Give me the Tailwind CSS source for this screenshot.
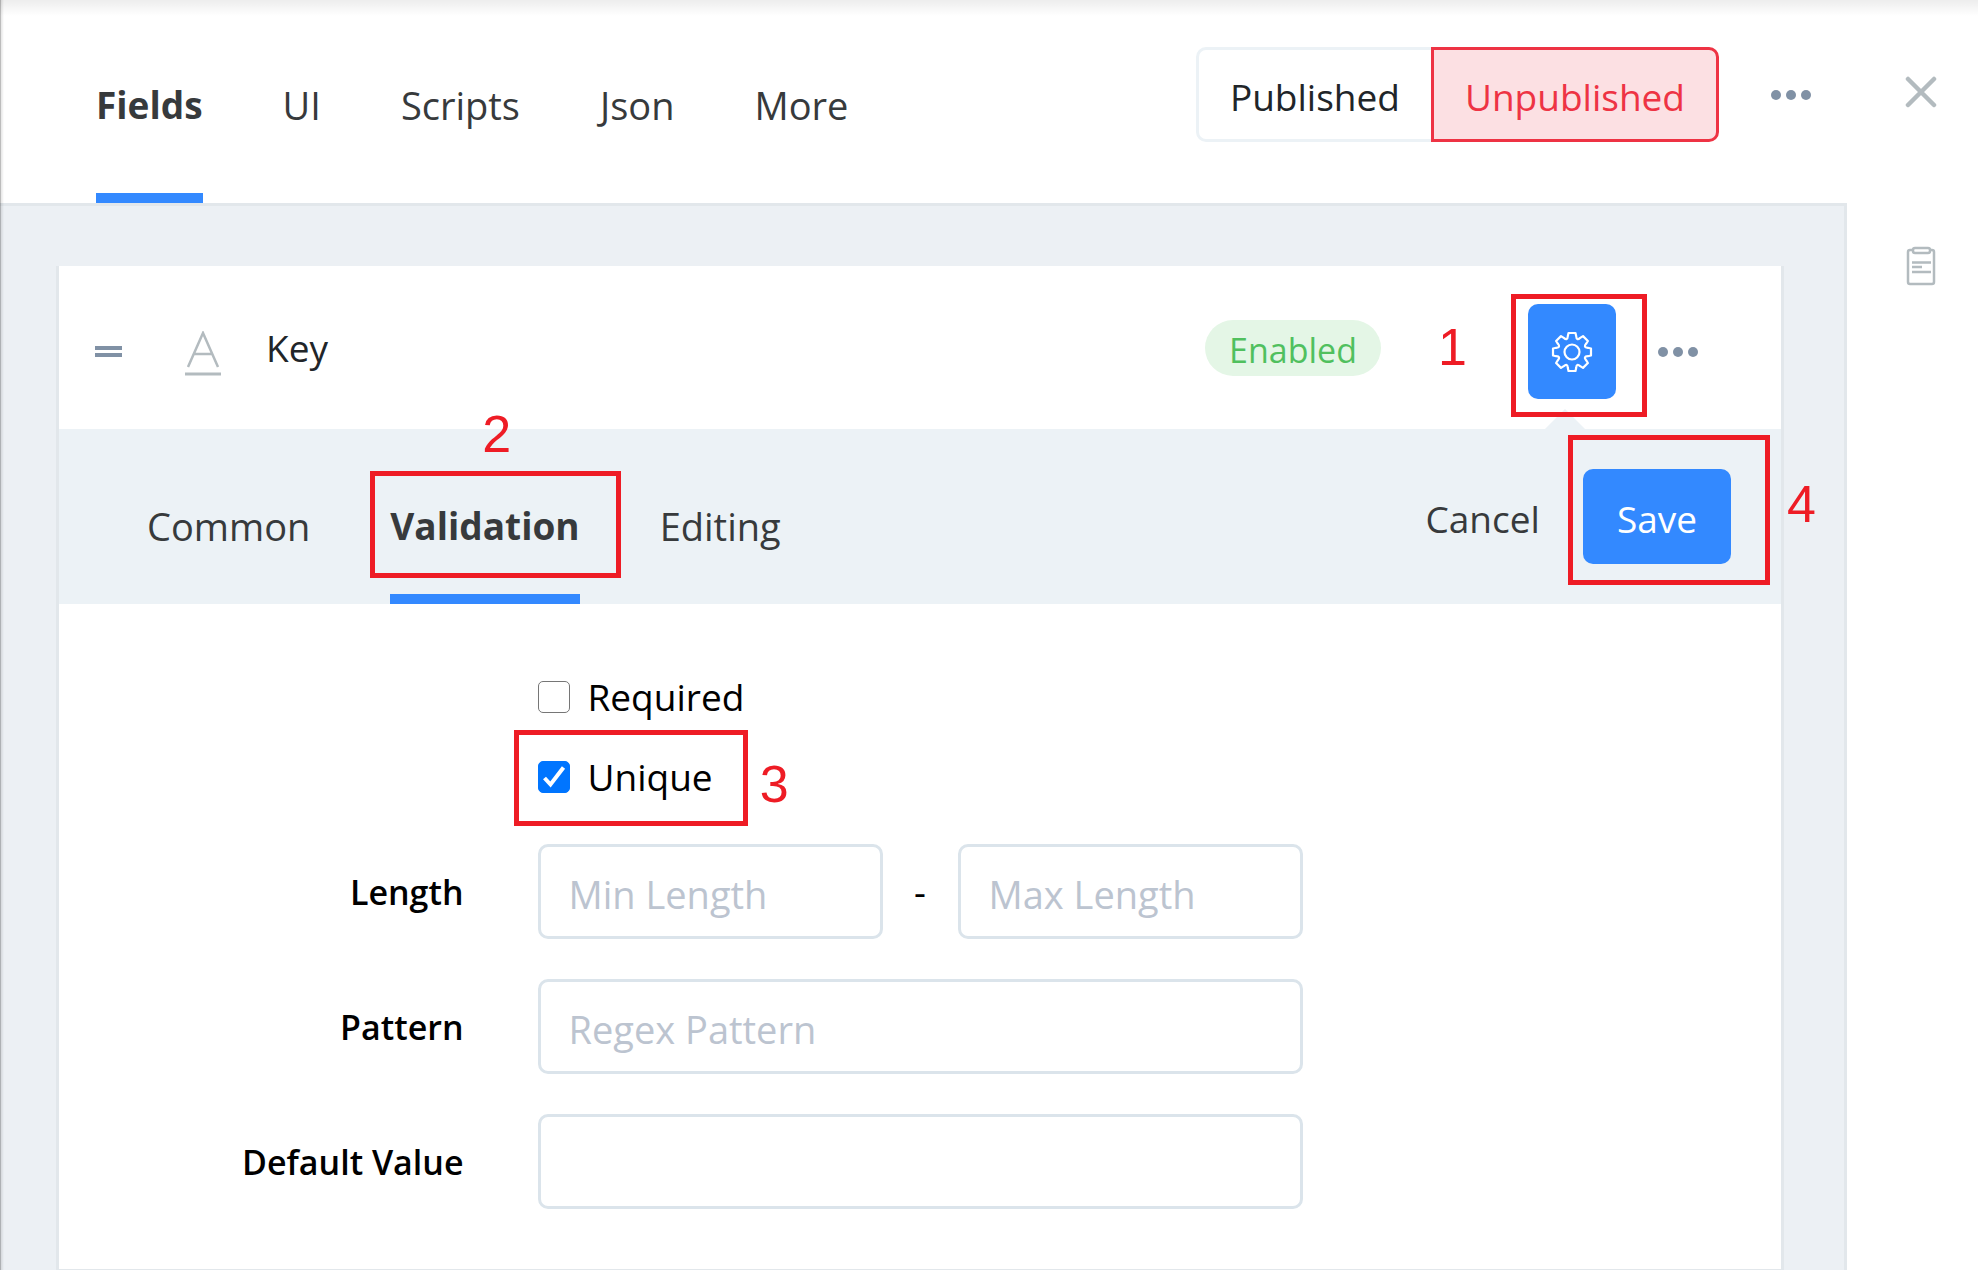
<!DOCTYPE html>
<html lang="en">

<head>
    <meta charset="UTF-8">
    <meta name="viewport" content="width=device-width, initial-scale=1.0">
    <title>Schema Fields</title>
    <script src="https://cdn.jsdelivr.net/npm/@tailwindcss/browser@4"></script>
</head>

<body class="relative flex min-h-screen overflow-x-hidden bg-white font-['Open_Sans',sans-serif] text-[37px] leading-[54px] text-[#373a3c]">
    <!-- Edge shadows -->
    <div class="pointer-events-none absolute inset-x-0 top-0 h-4 bg-linear-to-b from-black/7 to-transparent"></div>
    <div class="pointer-events-none absolute inset-y-0 left-0 w-1 border-l border-black/25 bg-linear-to-r from-black/10 to-transparent"></div>

    <main class="flex min-w-0 flex-1 flex-col">
        <!-- Top bar -->
        <header class="flex h-[206px] items-start justify-between border-b-3 border-[#e2e7eb] pr-9 pl-24">
            <nav class="flex h-full gap-20">
                <a href="#" class="border-b-10 border-[#3389ff] pt-[78px] font-bold">Fields</a>
                <a href="#" class="pt-[78px] text-[38px]">UI</a>
                <a href="#" class="pt-[78px] text-[38px]">Scripts</a>
                <a href="#" class="pt-[78px] text-[38px]">Json</a>
                <a href="#" class="pt-[78px] text-[38px]">More</a>
            </nav>
            <div class="flex items-center pt-[47px]">
                <button class="h-[95px] rounded-l-[10px] border-3 border-r-0 border-[#ecf2f6] px-[31px] pt-1 text-[#212529]">Published</button>
                <button class="h-[95px] rounded-r-[10px] border-3 border-[#ee3344] bg-[#fce0e3] px-[31px] pt-1 text-[#ee3344]">Unpublished</button>
                <button aria-label="Schema options" class="ml-[52px]">
                    <svg class="h-10 w-10 fill-[#8091a5]" viewBox="0 0 40 40">
                        <circle cx="5" cy="20" r="5" />
                        <circle cx="20" cy="20" r="5" />
                        <circle cx="35" cy="20" r="5" />
                    </svg>
                </button>
            </div>
        </header>

        <div class="flex flex-1 flex-col border-r-3 border-[#e2e7eb] bg-[#ecf0f4] pt-[60px] pr-[60px] pl-14">
            <section class="flex-1 border-x-3 border-b border-[#e2e7eb] bg-white">
                <!-- Field row -->
                <div class="flex h-[163px] items-center pt-2 pr-[83px] pl-9">
                    <svg class="h-[12px] w-[27px] fill-[#8091a5]" viewBox="0 0 27 12">
                        <path d="M0 0h27v4H0zM0 7h27v4H0z" />
                    </svg>
                    <svg class="mt-1 ml-[63px] h-[46px] w-[36px] fill-none stroke-[#b3bbbf] stroke-[2.5]" viewBox="0 0 36 46">
                        <path d="M3 36L18 2l15 34M8 23h20" />
                        <path d="M0 43h36" stroke-width="3" />
                    </svg>
                    <h2 class="mb-2 ml-[45px] text-[#212529]">Key</h2>
                    <span class="mr-[147px] mb-2 ml-auto flex h-14 items-center rounded-full bg-[#e4f6e6] px-6 pt-1 text-[34px] text-[#50c05e]">Enabled</span>
                    <div class="relative">
                        <button aria-label="Field settings" class="flex h-[95px] w-[88px] items-center justify-center rounded-[10px] bg-[#3389ff]">
                            <svg class="h-[42px] w-[42px] fill-none stroke-white stroke-[2.2]" viewBox="-21 -21 42 42" stroke-linejoin="round">
                                <path d="M-3.5-19L3.5-19 4.2-15.8Q4.5-10.9 8.2-14.1L11-15.9 15.9-11 14.1-8.2Q10.9-4.5 15.8-4.2L19-3.5 19 3.5 15.8 4.2Q10.9 4.5 14.1 8.2L15.9 11 11 15.9 8.2 14.1Q4.5 10.9 4.2 15.8L3.5 19-3.5 19-4.2 15.8Q-4.5 10.9-8.2 14.1L-11 15.9-15.9 11-14.1 8.2Q-10.9 4.5-15.8 4.2L-19 3.5-19-3.5-15.8-4.2Q-10.9-4.5-14.1-8.2L-15.9-11-11-15.9-8.2-14.1Q-4.5-10.9-4.2-15.8Z" />
                                <circle r="7.5" />
                            </svg>
                        </button>
                        <!-- Pointer of the open panel -->
                        <svg class="absolute top-[105px] left-[17px] h-5 w-10 fill-[#ecf2f6]" viewBox="0 0 40 20">
                            <path d="M0 20L20 0l20 20z" />
                        </svg>
                        <div class="pointer-events-none absolute -top-[10px] -right-[31px] -bottom-[18px] -left-[17px] border-5 border-[#ee1c25]"></div>
                        <span class="absolute top-4 -left-[90px] font-['Liberation_Sans',sans-serif] text-[52px] text-[#ee1c25]">1</span>
                    </div>
                    <button aria-label="Field options" class="ml-[42px]">
                        <svg class="h-10 w-10 fill-[#8091a5]" viewBox="0 0 40 40">
                            <circle cx="5" cy="20" r="5" />
                            <circle cx="20" cy="20" r="5" />
                            <circle cx="35" cy="20" r="5" />
                        </svg>
                    </button>
                </div>

                <!-- Panel tabs -->
                <div class="flex h-[175px] items-start justify-between bg-[#ecf2f6] pr-[50px] pl-[88px]">
                    <nav class="flex h-full gap-20">
                        <a href="#" class="pt-[70px] text-[38px]">Common</a>
                        <a href="#" class="relative border-b-10 border-[#3389ff] pt-[70px] font-bold">Validation
                            <span class="pointer-events-none absolute top-[42px] -right-[41px] -left-5 h-[107px] border-5 border-[#ee1c25]"></span>
                            <span class="absolute -top-[22px] left-[92px] font-['Liberation_Sans',sans-serif] text-[52px] font-normal text-[#ee1c25]">2</span>
                        </a>
                        <a href="#" class="pt-[70px] text-[38px]">Editing</a>
                    </nav>
                    <div class="flex gap-[43px] pt-10">
                        <button class="h-[95px] pt-1">Cancel</button>
                        <div class="relative">
                            <button class="h-[95px] rounded-[10px] bg-[#3389ff] px-[34px] pt-1 text-white">Save</button>
                            <div class="pointer-events-none absolute -top-[34px] -right-[39px] -bottom-[21px] -left-[15px] border-5 border-[#ee1c25]"></div>
                            <span class="absolute top-2 -right-[85px] font-['Liberation_Sans',sans-serif] text-[52px] text-[#ee1c25]">4</span>
                        </div>
                    </div>
                </div>

                <!-- Validation form -->
                <form class="grid grid-cols-4 items-center gap-y-10 px-[22px] pt-[66px] pb-[58px] text-black">
                    <div class="col-span-2 col-start-2 flex flex-col items-start gap-[26px] px-[37px]">
                        <label class="flex items-center gap-[18px]">
                            <span class="relative h-8 w-8">
                                <input type="checkbox" class="peer block h-8 w-8 appearance-none rounded-[5px] border border-[#767676] checked:border-[#0075ff] checked:bg-[#0075ff]">
                                <svg class="pointer-events-none absolute inset-0 hidden h-8 w-8 fill-none stroke-white stroke-4 peer-checked:block" viewBox="0 0 32 32">
                                    <path d="M6.500 17l6 6.500L25.500 6.500" />
                                </svg>
                            </span>
                            Required
                        </label>
                        <label class="relative flex items-center gap-[18px]">
                            <span class="relative h-8 w-8">
                                <input type="checkbox" class="peer block h-8 w-8 appearance-none rounded-[5px] border border-[#767676] checked:border-[#0075ff] checked:bg-[#0075ff]" checked>
                                <svg class="pointer-events-none absolute inset-0 hidden h-8 w-8 fill-none stroke-white stroke-4 peer-checked:block" viewBox="0 0 32 32">
                                    <path d="M6.500 17l6 6.500L25.500 6.500" />
                                </svg>
                            </span>
                            Unique
                            <span class="pointer-events-none absolute -top-5 -right-[35px] -left-6 h-24 border-5 border-[#ee1c25]"></span>
                            <span class="absolute top-[7px] -right-[76px] font-['Liberation_Sans',sans-serif] text-[52px] text-[#ee1c25]">3</span>
                        </label>
                    </div>

                    <label for="min-length" class="col-start-1 pr-[37px] text-right text-[34px] font-semibold">Length</label>
                    <div class="col-span-2 flex items-center px-[37px]">
                        <input id="min-length" type="text" placeholder="Min Length" class="h-[95px] min-w-0 flex-1 rounded-[10px] border-3 border-[#dbe4eb] px-7 pt-1 text-[38px] placeholder:text-[#bcc4d0]">
                        <span class="w-[75px] text-center">-</span>
                        <input aria-label="Max Length" type="text" placeholder="Max Length" class="h-[95px] min-w-0 flex-1 rounded-[10px] border-3 border-[#dbe4eb] px-7 pt-1 text-[38px] placeholder:text-[#bcc4d0]">
                    </div>

                    <label for="pattern" class="col-start-1 pr-[37px] text-right text-[34px] font-semibold">Pattern</label>
                    <div class="col-span-2 flex px-[37px]">
                        <input id="pattern" type="text" placeholder="Regex Pattern" class="h-[95px] w-full rounded-[10px] border-3 border-[#dbe4eb] px-7 pt-1 text-[38px] placeholder:text-[#bcc4d0]">
                    </div>

                    <label for="default-value" class="col-start-1 pr-[37px] text-right text-[34px] font-semibold">Default Value</label>
                    <div class="col-span-2 flex px-[37px]">
                        <input id="default-value" type="text" class="h-[95px] w-full rounded-[10px] border-3 border-[#dbe4eb] px-7 pt-1 text-[38px]">
                    </div>
                </form>
            </section>
        </div>
    </main>

    <!-- Right rail -->
    <aside class="flex w-[131px] flex-col items-start pt-[76px] pl-[58px]">
        <button aria-label="Close">
            <svg class="h-8 w-8 fill-none stroke-[#b3bbbf] stroke-[4.5]" viewBox="0 0 32 32" stroke-linecap="round">
                <path d="M3 3l26 26M29 3L3 29" />
            </svg>
        </button>
        <button aria-label="History" class="mt-[138px]">
            <svg class="h-10 w-8 fill-none stroke-[#b3bbbf] stroke-[2.5]" viewBox="0 0 32 40">
                <path d="M8 4H5a2 2 0 0 0-2 2v30a2 2 0 0 0 2 2h22a2 2 0 0 0 2-2V6a2 2 0 0 0-2-2h-3" />
                <rect x="8" y="2" width="17" height="5" rx="2" />
                <path d="M7 16.500h19M7 21h10M7 26h19" />
            </svg>
        </button>
    </aside>
</body>

</html>
